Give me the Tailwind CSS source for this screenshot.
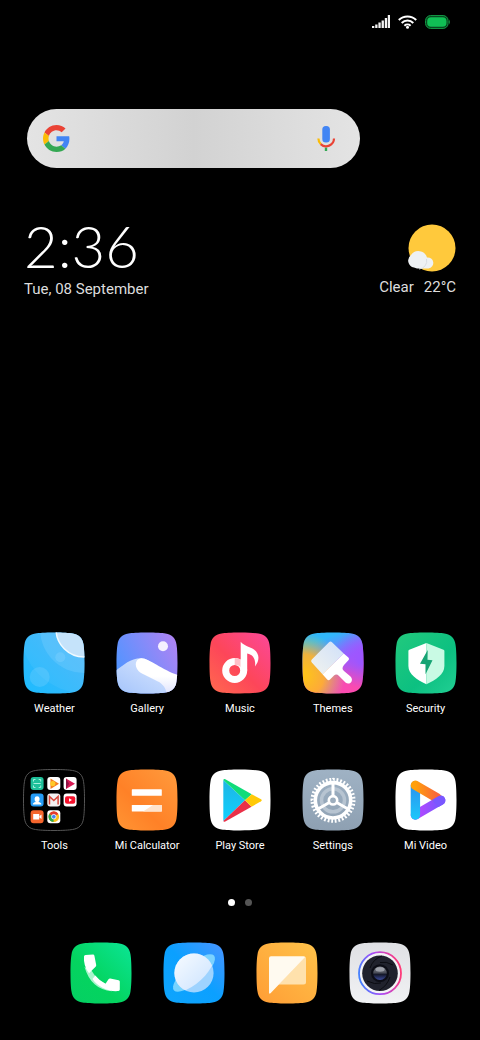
<!DOCTYPE html>
<html lang="en">
<head>
    <meta charset="UTF-8">
    <meta name="viewport" content="width=device-width, initial-scale=1.0">
    <title>Home screen</title>
    <script src="https://cdn.jsdelivr.net/npm/@tailwindcss/browser@4"></script>
</head>
<body class="bg-black text-white font-['Roboto',sans-serif]">

    <!-- Shared shapes and gradients -->
    <svg class="absolute size-0" aria-hidden="true">
        <defs>
            <path id="tile" d="M31 .5C40 .5 46 .9 49.500 1.500 56 2.400 59.600 6 60.500 12.500 61.100 16 61.500 22 61.500 31 61.500 40 61.100 46 60.500 49.500 59.600 56 56 59.600 49.500 60.500 46 61.100 40 61.500 31 61.500 22 61.500 16 61.100 12.500 60.500 6 59.600 2.400 56 1.500 49.500 .9 46 .5 40 .5 31 .5 22 .9 16 1.500 12.500 2.400 6 6 2.400 12.500 1.500 16 .9 22 .5 31 .5Z"/>
            <clipPath id="clip"><use href="#tile"/></clipPath>
            <clipPath id="planet"><circle cx="31" cy="31" r="19.600"/></clipPath>
            <linearGradient id="weather" x1="1" y1="0" x2="0" y2="1"><stop offset="0" stop-color="#4db4f8"/><stop offset="1" stop-color="#1cbcff"/></linearGradient>
            <linearGradient id="gallery" x1="0" y1=".5" x2="1" y2="0"><stop offset="0" stop-color="#5494ff"/><stop offset="1" stop-color="#b582f3"/></linearGradient>
            <linearGradient id="hill" x1="0" y1="1" x2="1" y2="0"><stop offset="0" stop-color="#a4c4fb"/><stop offset="1" stop-color="#e0ebff"/></linearGradient>
            <linearGradient id="dune" x1="0" y1="0" x2="0" y2="1"><stop offset=".5" stop-color="#fff"/><stop offset="1" stop-color="#dfe3fd"/></linearGradient>
            <linearGradient id="music" x1="0" y1="1" x2="1" y2="0"><stop offset="0" stop-color="#ff6a4e"/><stop offset=".45" stop-color="#fd4659"/><stop offset="1" stop-color="#fc489a"/></linearGradient>
            <linearGradient id="themes" x1=".3" y1="0" x2=".7" y2="1"><stop offset=".1" stop-color="#31b7fa"/><stop offset=".5" stop-color="#9c5cff"/><stop offset=".75" stop-color="#f64bb4"/><stop offset="1" stop-color="#fb4bb0"/></linearGradient>
            <radialGradient id="themesYellow" cx="0" cy=".7" r=".7"><stop offset=".1" stop-color="#ffc21c"/><stop offset=".5" stop-color="#ffb52a" stop-opacity=".9"/><stop offset="1" stop-color="#a8d070" stop-opacity="0"/></radialGradient>
            <radialGradient id="themesPurple" cx="1" cy=".42" r=".5"><stop offset=".2" stop-color="#9d56ff"/><stop offset="1" stop-color="#9d56ff" stop-opacity="0"/></radialGradient>
            <linearGradient id="brush" x1="1" y1="0" x2="0" y2="1"><stop offset="0" stop-color="#cfe0fa"/><stop offset="1" stop-color="#f2f3ee"/></linearGradient>
            <linearGradient id="security" x1="0" y1="0" x2="1" y2="1"><stop offset="0" stop-color="#22c97d"/><stop offset=".6" stop-color="#0cc081"/><stop offset="1" stop-color="#22cf94"/></linearGradient>
            <linearGradient id="calc" x1="1" y1="0" x2="0" y2="1"><stop offset="0" stop-color="#ff9b3d"/><stop offset=".6" stop-color="#ff8127"/><stop offset="1" stop-color="#ff9534"/></linearGradient>
            <linearGradient id="playBlue" x1="0" y1="0" x2="0" y2="1"><stop offset="0" stop-color="#1fb5e3"/><stop offset="1" stop-color="#0fd0ff"/></linearGradient>
            <linearGradient id="settings" x1="0" y1="0" x2="0" y2="1"><stop offset="0" stop-color="#9fb2c4"/><stop offset="1" stop-color="#8ea0b2"/></linearGradient>
            <linearGradient id="vidBlue" x1="0" y1="0" x2="0" y2="1"><stop offset="0" stop-color="#2b8dee"/><stop offset="1" stop-color="#1ec8fa"/></linearGradient>
            <linearGradient id="vidOrange"><stop offset="0" stop-color="#ffa00a"/><stop offset="1" stop-color="#f9663c"/></linearGradient>
            <linearGradient id="vidPurple"><stop offset="0" stop-color="#bd45ff"/><stop offset="1" stop-color="#7458ff"/></linearGradient>
            <linearGradient id="phone" x1="0" y1="1" x2="1" y2="0"><stop offset="0" stop-color="#05cf63"/><stop offset=".4" stop-color="#04d45f"/><stop offset="1" stop-color="#0be596"/></linearGradient>
            <linearGradient id="browser" x1="0" y1="1" x2="1" y2="0"><stop offset="0" stop-color="#0fa5fc"/><stop offset=".5" stop-color="#0ba0ff"/><stop offset="1" stop-color="#4a94ff"/></linearGradient>
            <linearGradient id="sphere" x1="0" y1="0" x2="1" y2="1"><stop offset=".1" stop-color="#fff"/><stop offset=".8" stop-color="#cfe5ff"/></linearGradient>
            <linearGradient id="message" x1="0" y1="1" x2="1" y2="0"><stop offset="0" stop-color="#ff9d35"/><stop offset="1" stop-color="#ffc34a"/></linearGradient>
            <linearGradient id="camera" x1="0" y1="0" x2="0" y2="1"><stop offset="0" stop-color="#dfe0e4"/><stop offset="1" stop-color="#f1f2f4"/></linearGradient>
            <linearGradient id="cameraRing" x1="0" y1=".7" x2="1" y2=".5"><stop offset="0" stop-color="#3c84ff"/><stop offset=".45" stop-color="#a94cf7"/><stop offset="1" stop-color="#ff3a78"/></linearGradient>
            <linearGradient id="lens" x1="0" y1="0" x2="0" y2="1"><stop offset="0" stop-color="#7f828c"/><stop offset=".45" stop-color="#4c4f5a"/><stop offset=".6" stop-color="#15182a"/><stop offset="1" stop-color="#3b4a9c"/></linearGradient>
        </defs>
    </svg>

    <main class="min-h-screen flex flex-col">

        <!-- Status bar -->
        <header class="flex justify-end items-center gap-2 pt-[15px] pr-[30px]">
            <svg class="w-[18px] h-[14px]" viewBox="0 0 18 14" fill="#f4f4f4">
                <path d="M0 11h2.300v2H0zM3.200 9.500h2.300V13H3.200zM6.400 7.500h2.300V13H6.400zM9.600 5.500h2.300V13H9.600zM12.800 3h2.300v10h-2.300zM15.800 0H18v13h-2.200z"/>
            </svg>
            <svg class="w-[19px] h-[14px]" viewBox="0 0 19 14" fill="none" stroke="#fff" stroke-width="2">
                <path d="M.8 5a12.400 12.400 0 0 1 17.400 0M3.700 8a8.200 8.200 0 0 1 11.600 0M6.400 10.700a4.600 4.600 0 0 1 6.200 0"/>
                <circle cx="9.500" cy="12.300" r="1.500" fill="#fff" stroke="none"/>
            </svg>
            <svg class="w-[25px] h-[14px]" viewBox="0 0 25 14">
                <rect x=".6" y=".6" width="22.500" height="12.800" rx="5" fill="#06401c" stroke="#14a048"/>
                <rect x="2.200" y="2.200" width="19.300" height="9.600" rx="3.800" fill="#10c055"/>
                <path d="M24 4.500q1.500 2.500 0 5z" fill="#14b04e"/>
            </svg>
        </header>

        <!-- Search -->
        <form class="mt-[80px] ml-[27px] mr-[120px] h-[59px] rounded-full flex items-center px-4 bg-linear-to-r from-[#e4e4e4] via-[#d2d2d2] to-[#e4e4e4]">
            <svg class="size-[27px] shrink-0" viewBox="0 0 48 48" aria-hidden="true">
                <path fill="#ea4335" d="M24 9.500c3.540 0 6.710 1.220 9.210 3.600l6.850-6.850C35.900 2.380 30.470 0 24 0 14.620 0 6.510 5.380 2.560 13.220l7.980 6.190C12.430 13.720 17.740 9.500 24 9.500z"/>
                <path fill="#4285f4" d="M46.980 24.550c0-1.570-.15-3.090-.38-4.550H24v9.020h12.940c-.58 2.960-2.260 5.480-4.780 7.180l7.730 6c4.510-4.180 7.090-10.360 7.090-17.650z"/>
                <path fill="#fbbc05" d="M10.530 28.590c-.48-1.450-.76-2.990-.76-4.590s.27-3.140.76-4.590l-7.980-6.190C.92 16.460 0 20.120 0 24c0 3.880.92 7.540 2.560 10.780l7.970-6.190z"/>
                <path fill="#34a853" d="M24 48c6.480 0 11.930-2.130 15.890-5.810l-7.730-6c-2.150 1.450-4.920 2.300-8.160 2.300-6.260 0-11.570-4.220-13.470-9.910l-7.980 6.190C6.510 42.620 14.620 48 24 48z"/>
            </svg>
            <input type="search" aria-label="Search" class="flex-1 min-w-0 h-full px-3 bg-transparent text-gray-800 outline-none">
            <button type="button" aria-label="Voice search" class="mr-2">
                <svg class="block w-5 h-[27px]" viewBox="0 0 20 27" fill="none">
                    <rect x="6.300" y="1" width="7.600" height="16.500" rx="3.500" fill="#4285f4"/>
                    <path d="M10 22.500v3.500" stroke="#34a853" stroke-width="2.400"/>
                    <path d="M2.400 13.500a7.900 7.900 0 0 0 2.500 5.800" stroke="#fbbc05" stroke-width="2.200"/>
                    <path d="M4.700 19.100a7.900 7.900 0 0 0 13.300-5.600" stroke="#ea4335" stroke-width="2.200"/>
                </svg>
            </button>
        </form>

        <!-- Clock and weather -->
        <section class="mt-[43px] px-6 flex justify-between items-end text-[15px] text-[#ddd]">
            <div>
                <time class="block text-[58px] leading-[70px] font-light text-white font-['Lato',sans-serif]">2:36</time>
                <p class="leading-4">Tue, 08 September</p>
            </div>
            <div class="flex flex-col items-end">
                <svg class="w-12 h-12 mb-[5px]" viewBox="0 0 48 48">
                    <circle cx="24" cy="24" r="23.500" fill="#ffc93c"/>
                    <path d="M6 43.500a7 7 0 0 1-3-12.500 9 9 0 0 1 16 2.500 5.500 5.500 0 1 1 1.500 11H9z" fill="#eef1f4"/>
                    <path d="M11 45a8 8 0 0 0 7.500-10" fill="none" stroke="#d9dde2"/>
                </svg>
                <p class="leading-5 flex gap-[10px]"><span>Clear</span><span>22°C</span></p>
            </div>
        </section>

        <div class="flex-1"></div>

        <!-- Apps -->
        <nav class="grid grid-cols-5 gap-y-[52px] px-2 text-[11px] leading-4 text-center">
            <a href="#" class="flex flex-col items-center gap-[7px]">
                <svg class="size-[62px]" viewBox="0 0 62 62">
                    <g clip-path="url(#clip)">
                        <rect width="62" height="62" fill="url(#weather)"/>
                        <g fill="#8fd8ff">
                            <circle cx="61" cy="-3" r="64" fill-opacity=".1"/>
                            <circle cx="61" cy="-3" r="44" fill-opacity=".25"/>
                            <circle cx="16.700" cy="45" r="10" fill-opacity=".25"/>
                            <circle cx="37.300" cy="25.300" r="5" fill-opacity=".3"/>
                        </g>
                        <circle cx="61" cy="-3" r="28" fill="#c5e3fa" stroke="#f1faff" stroke-width="1.500"/>
                    </g>
                </svg>
                Weather
            </a>
            <a href="#" class="flex flex-col items-center gap-[7px]">
                <svg class="size-[62px]" viewBox="0 0 62 62">
                    <g clip-path="url(#clip)">
                        <rect width="62" height="62" fill="url(#gallery)"/>
                        <circle cx="47" cy="14.300" r="5" fill="#f5f0ff"/>
                        <path d="M0 38.500C8 33 14 26.300 25 26.300 34 26 44 40 62 52V62H0z" fill="url(#hill)"/>
                        <path d="M25 26.300C32 25.500 46 38 62 43V62H51C49 54 46 51 39 48L25 41C18 37 18 27 25 26.300z" fill="url(#dune)"/>
                    </g>
                </svg>
                Gallery
            </a>
            <a href="#" class="flex flex-col items-center gap-[7px]">
                <svg class="size-[62px]" viewBox="0 0 62 62">
                    <use href="#tile" fill="url(#music)"/>
                    <circle cx="25.700" cy="38.500" r="9" fill="none" stroke="#fff" stroke-width="7"/>
                    <path d="M25.700 26a12.500 12.500 0 0 1 6 1.500v7.500A7 7 0 0 0 25.700 33z" fill="#ffc0c8"/>
                    <path d="M31.700 9.700C35 14 41 14.500 45 17.500 51 22 50.500 29 46 34.500 47 27 44 22.500 38.200 21.500V38.500H31.700z" fill="#fff"/>
                </svg>
                Music
            </a>
            <a href="#" class="flex flex-col items-center gap-[7px]">
                <svg class="size-[62px]" viewBox="0 0 62 62">
                    <use href="#tile" fill="url(#themes)"/>
                    <use href="#tile" fill="url(#themesPurple)"/>
                    <use href="#tile" fill="url(#themesYellow)"/>
                    <path d="M27 10.200q1.500-1.500 3 0L41.700 21.500 20.500 42.300 9.800 30.500q-1.500-1.500 0-3z" fill="url(#brush)"/>
                    <path d="M41.700 21.500l4.700 4q1.400 1.400 0 2.800L42 33q-3 3.500 0 6l6.500 5.500c4 4-1 9.500-5 6L37 44q-2.500-2.500-5-.5l-4 4q-1.400 1.400-2.800 0l-4.700-5.200z" fill="#fff"/>
                </svg>
                Themes
            </a>
            <a href="#" class="flex flex-col items-center gap-[7px]">
                <svg class="size-[62px]" viewBox="0 0 62 62">
                    <use href="#tile" fill="url(#security)"/>
                    <path d="M31.400 11L14.300 17.700q-.9.400-.9 1.300V34C13.400 42 22 48 31.400 52.300z" fill="#fff"/>
                    <path d="M31.400 11L48.500 17.700q.9.400.9 1.300V34C49.400 42 41 48 31.400 52.300z" fill="#c9fae4"/>
                    <path d="M32.700 18L25 31.800l5.500.5v10L37.500 28.300l-5-.6z" fill="#16a474"/>
                </svg>
                Security
            </a>
            <a href="#" class="flex flex-col items-center gap-[7px]">
                <svg class="size-[62px]" viewBox="0 0 62 62">
                    <use href="#tile" fill="#000" stroke="#555" stroke-width="1"/>
                    <!-- Scanner, Play Music, Play Movies -->
                    <rect x="7.600" y="8" width="13" height="13" rx="3" fill="#1ec09a"/>
                    <path d="M10.500 12.500v-2h2M15.700 10.500h2v2M17.700 16.500v2h-2M12.500 18.500h-2v-2M10.500 14.500h7.200" fill="none" stroke="#a5f0dc"/>
                    <rect x="24.300" y="8" width="13" height="13" rx="3" fill="#fff"/>
                    <path d="M27.500 9.500v10.500l8.500-5.300z" fill="#f57c1f"/>
                    <circle cx="29.800" cy="14.600" r="2.600" fill="#ffc928"/>
                    <rect x="40.600" y="8" width="13" height="13" rx="3" fill="#fff"/>
                    <path d="M43 9.500v10.500l9-5.300z" fill="#d81b55"/>
                    <path d="M43 9.500v10.500l3-5.300z" fill="#8c1444"/>
                    <!-- Contacts, Gmail, YouTube -->
                    <rect x="7.600" y="24.600" width="13" height="13" rx="3" fill="#259bf5"/>
                    <path d="M9.800 35.500q0-2 3-2.500-1.500-1.500-1.200-3.500.2-2.300 2.500-2.300t2.500 2.300Q16.900 31.500 15.400 33q3 .5 3 2.500z" fill="#fff"/>
                    <rect x="24.300" y="24.600" width="13" height="13" rx="3" fill="#f3f1f1"/>
                    <path d="M26.500 35.500v-8l4.300 4 4.300-4v8" fill="none" stroke="#d8473b" stroke-width="1.500"/>
                    <rect x="40.600" y="24.600" width="13" height="13" rx="3" fill="#fff"/>
                    <rect x="42" y="27.200" width="10.200" height="7.600" rx="2" fill="#f5122d"/>
                    <path d="M46 29.200v3.600l3-1.800z" fill="#fff"/>
                    <!-- Recorder, Chrome -->
                    <rect x="7.600" y="41.200" width="13" height="13" rx="3" fill="#f5662d"/>
                    <path d="M10.200 45h6v5.500h-6zM16.500 47l2-1.500v4.500l-2-1.500z" fill="#fff"/>
                    <rect x="24.300" y="41.200" width="13" height="13" rx="3" fill="#fff"/>
                    <circle cx="30.800" cy="47.700" r="5.300" fill="#fbc116"/>
                    <path d="M30.800 47.700L26.200 45a5.300 5.300 0 0 1 9.200 0z" fill="#e33b2e"/>
                    <path d="M30.800 47.700L26.200 45a5.300 5.300 0 0 0 4.300 8z" fill="#2da94f"/>
                    <circle cx="30.800" cy="47.700" r="2.300" fill="#4285f4" stroke="#fff" stroke-width=".8"/>
                </svg>
                Tools
            </a>
            <a href="#" class="flex flex-col items-center gap-[7px]">
                <svg class="size-[62px]" viewBox="0 0 62 62">
                    <use href="#tile" fill="url(#calc)"/>
                    <rect x="15.800" y="20.300" width="30" height="6.500" rx=".6" fill="#fff"/>
                    <rect x="15.800" y="36" width="30" height="6.500" rx=".6" fill="#fff"/>
                    <path d="M27 42.500l10-6.500h8.200q.6 0 .6.600v5.300q0 .6-.6.600z" fill="#ffe3cc"/>
                </svg>
                <span class="whitespace-nowrap">Mi Calculator</span>
            </a>
            <a href="#" class="flex flex-col items-center gap-[7px]">
                <svg class="size-[62px]" viewBox="0 0 62 62">
                    <use href="#tile" fill="#fff"/>
                    <path d="M14.300 11v41L36 31.300z" fill="url(#playBlue)"/>
                    <path d="M14.300 11q.5-1.500 2-.8L42.700 25.300 36 31.300z" fill="#10dc7a"/>
                    <path d="M14.300 52q.5 1.200 2 .5L42.500 37.800 36 31.300z" fill="#ea3048"/>
                    <path d="M42.700 25.300L52 30.300q1.500 1 0 2L42.500 37.800 36 31.300z" fill="#ffc907"/>
                </svg>
                Play Store
            </a>
            <a href="#" class="flex flex-col items-center gap-[7px]">
                <svg class="size-[62px]" viewBox="0 0 62 62">
                    <use href="#tile" fill="url(#settings)"/>
                    <g fill="none" stroke="#fff">
                        <circle cx="31" cy="31.300" r="11.500" stroke="#b7c4d1" stroke-width="3.500"/>
                        <circle cx="31" cy="31.300" r="17.700" stroke-width="3.600"/>
                        <circle cx="31" cy="31.300" r="20.600" stroke-width="3.800" stroke-dasharray="1.800" pathLength="129.600"/>
                        <path d="M31 27V14M27.300 33.500L16 40M34.700 33.500L46 40" stroke-width="3"/>
                        <circle cx="31" cy="31.300" r="4.200" fill="#9cadbd" stroke-width="2.600"/>
                    </g>
                </svg>
                Settings
            </a>
            <a href="#" class="flex flex-col items-center gap-[7px]">
                <svg class="size-[62px]" viewBox="0 0 62 62">
                    <use href="#tile" fill="#fff"/>
                    <path d="M20.400 46L45.700 31.300" stroke="url(#vidPurple)" stroke-width="9.400" stroke-linecap="round"/>
                    <rect x="15.700" y="12" width="9.400" height="38.700" rx="4.700" fill="url(#vidBlue)"/>
                    <path d="M20.400 16.300L42 28.900" stroke="url(#vidOrange)" stroke-width="9.400" stroke-linecap="round"/>
                    <path d="M36.700 31L43.300 27.200a4.700 4.700 0 1 1 4.700 8.200L43.500 38z" fill="#7a57ff"/>
                </svg>
                Mi Video
            </a>
        </nav>

        <!-- Page indicator -->
        <div class="mt-[45px] flex justify-center gap-[10px]">
            <span class="size-[7px] rounded-full bg-white"></span>
            <span class="size-[7px] rounded-full bg-[#555]"></span>
        </div>

        <!-- Dock -->
        <nav class="my-[36px] px-[54px] grid grid-cols-4 justify-items-center">
            <a href="#" aria-label="Phone">
                <svg class="size-[62px]" viewBox="0 0 62 62">
                    <use href="#tile" fill="url(#phone)"/>
                    <path d="M14.500 25C19 40 28 48 42 49.200L35.500 41.800Q27 38 21.500 28.500z" fill="#a8f5cc"/>
                    <path d="M14 14.500Q14 13 15.500 12.900L23 12.500q1.200 0 1.400 1.300L26.200 23q.1 1-.6 1.700L19 31.200C15 26 13.500 20 14 14.500z" fill="#fff"/>
                    <path d="M35.500 41.700l3-4.500q.7-.9 1.800-.7l8.300 1.700q1.200.3 1.200 1.400v8q0 1.400-1.400 1.500C38 50 28 45 22.500 37l2.800-3.500Q29.500 39 35.500 41.700z" fill="#fff"/>
                </svg>
            </a>
            <a href="#" aria-label="Browser">
                <svg class="size-[62px]" viewBox="0 0 62 62">
                    <use href="#tile" fill="url(#browser)"/>
                    <ellipse cx="31" cy="31" rx="26.500" ry="9.500" transform="rotate(-41 31 31)" fill="#8adcff" fill-opacity=".85"/>
                    <circle cx="31" cy="31" r="19.600" fill="#9ed3ff"/>
                    <g clip-path="url(#planet)">
                        <path d="M0 0H56L51 20C45 33 33 45 18 50L0 56z" fill="url(#sphere)"/>
                    </g>
                </svg>
            </a>
            <a href="#" aria-label="Messages">
                <svg class="size-[62px]" viewBox="0 0 62 62">
                    <use href="#tile" fill="url(#message)"/>
                    <path d="M49.200 14.800q.8.500.8 1.700V40q0 2.500-2.500 2.500h-25z" fill="#ffe1ac"/>
                    <path d="M15 14.300h32.500q1.300 0 1.800.6L14.500 51.300q-1.500 1-1.500-.8V16.300q0-2 2-2z" fill="#fffaf0"/>
                </svg>
            </a>
            <a href="#" aria-label="Camera">
                <svg class="size-[62px]" viewBox="0 0 62 62">
                    <use href="#tile" fill="url(#camera)"/>
                    <circle cx="31" cy="31.200" r="21" fill="#f4f4f6" stroke="url(#cameraRing)" stroke-width="1.800"/>
                    <circle cx="31" cy="31.200" r="17.800" fill="#20222d"/>
                    <path d="M21 26q3-9 12-12M41 35q-3 9-11 13.500M18 39q8 4 14 2M44 23q-7-4-13-2.500" fill="none" stroke="#0b0c12"/>
                    <circle cx="31" cy="31.200" r="9" fill="#0c0d16"/>
                    <circle cx="31" cy="31.200" r="6.800" fill="url(#lens)"/>
                    <ellipse cx="31" cy="27.500" rx="4.500" ry="2.200" fill="#b5b8c0" fill-opacity=".7"/>
                </svg>
            </a>
        </nav>

    </main>

</body>
</html>
